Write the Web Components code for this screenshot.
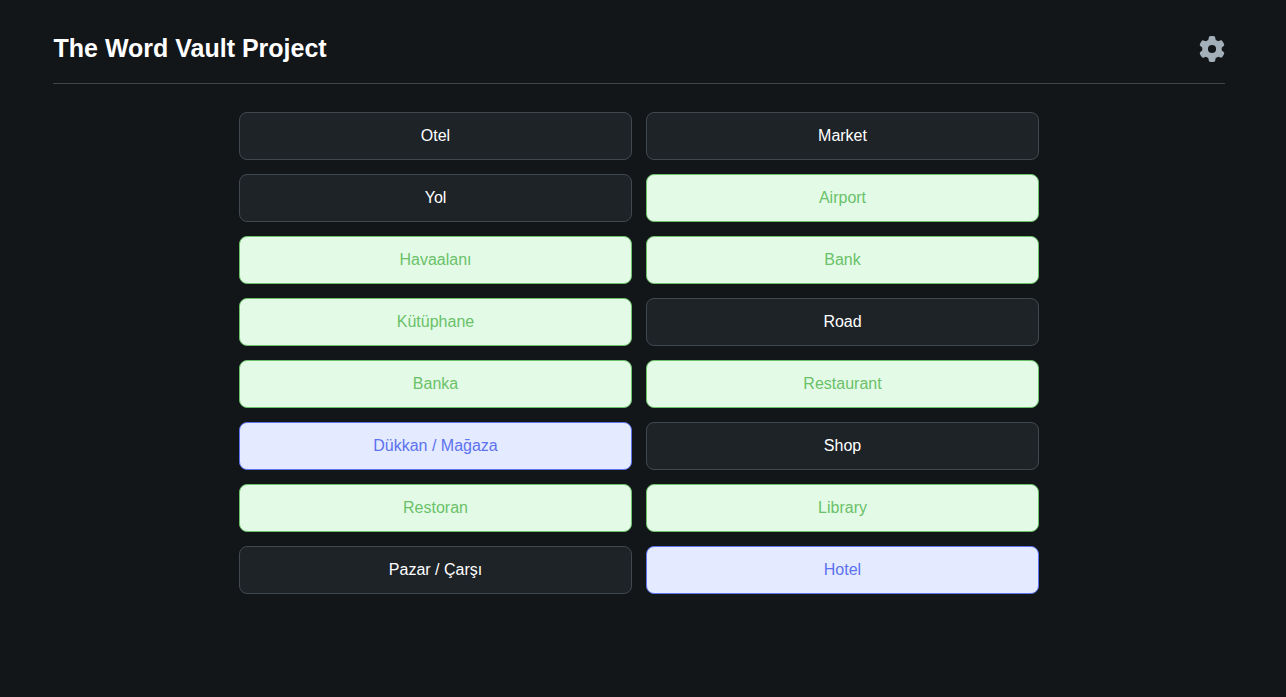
<!DOCTYPE html>
<html>
<head>
<meta charset="utf-8">
<title>The Word Vault Project</title>
<style>
  html, body { margin: 0; height: 100%; }
  body { background: #121619; font-family: "Liberation Sans", Arial, sans-serif; color: #fff; }
</style>
</head>
<body>
<vault-app>
  <vault-header slot="header" title-text="The Word Vault Project"></vault-header>
  <word-grid>
    <word-tile>Otel</word-tile>
    <word-tile>Market</word-tile>
    <word-tile>Yol</word-tile>
    <word-tile state="matched">Airport</word-tile>
    <word-tile state="matched">Havaalanı</word-tile>
    <word-tile state="matched">Bank</word-tile>
    <word-tile state="matched">Kütüphane</word-tile>
    <word-tile>Road</word-tile>
    <word-tile state="matched">Banka</word-tile>
    <word-tile state="matched">Restaurant</word-tile>
    <word-tile state="selected">Dükkan / Mağaza</word-tile>
    <word-tile>Shop</word-tile>
    <word-tile state="matched">Restoran</word-tile>
    <word-tile state="matched">Library</word-tile>
    <word-tile>Pazar / Çarşı</word-tile>
    <word-tile state="selected">Hotel</word-tile>
  </word-grid>
</vault-app>
<script>
class VaultApp extends HTMLElement {
  constructor() {
    super();
    this.attachShadow({ mode: 'open' });
    this.shadowRoot.innerHTML = `
      <style>
        :host { display: block; padding: 0 61px 0 53px; }
        .main { display: flex; justify-content: center; padding-top: 28px; }
      </style>
      <slot name="header"></slot>
      <div class="main"><slot></slot></div>
    `;
  }
}

class VaultHeader extends HTMLElement {
  constructor() {
    super();
    this.attachShadow({ mode: 'open' });
    this.shadowRoot.innerHTML = `
      <style>
        :host { display: flex; align-items: center; justify-content: space-between; box-sizing: content-box; height: 69px; padding-top: 14px; border-bottom: 1px solid #41464b; }
        h1 { margin: 0; padding: 0 0 2px 0.5px; font-size: 25px; font-weight: 700; line-height: 30px; color: #fff; }
        svg { display: block; width: 26px; height: 26px; fill: #a3afb9; }
        button { all: unset; display: block; cursor: pointer; padding: 0; }
      </style>
      <h1></h1>
      <button aria-label="Settings">
        <svg viewBox="0 0 512 512"><path d="M495.9 166.6c3.2 8.7 .5 18.4-6.4 24.6l-43.3 39.4c1.1 8.3 1.7 16.8 1.7 25.4s-.6 17.1-1.7 25.4l43.3 39.4c6.9 6.2 9.6 15.9 6.4 24.6c-4.4 11.9-9.7 23.3-15.8 34.3l-4.7 8.1c-6.6 11-14 21.4-22.1 31.2c-5.9 7.2-15.7 9.6-24.5 6.8l-55.7-17.7c-13.4 10.3-28.2 18.9-44 25.4l-12.5 57.1c-2 9.1-9 16.3-18.2 17.8c-13.8 2.3-28 3.5-42.5 3.5s-28.7-1.2-42.5-3.5c-9.2-1.5-16.2-8.7-18.2-17.8l-12.5-57.1c-15.8-6.5-30.6-15.1-44-25.4L83.1 425.9c-8.8 2.8-18.6 .3-24.5-6.8c-8.1-9.8-15.5-20.2-22.1-31.2l-4.7-8.1c-6.1-11-11.4-22.4-15.8-34.3c-3.2-8.7-.5-18.4 6.4-24.6l43.3-39.4C64.6 273.1 64 264.6 64 256s.6-17.1 1.7-25.4L22.4 191.2c-6.9-6.2-9.6-15.9-6.4-24.6c4.4-11.9 9.7-23.3 15.8-34.3l4.7-8.1c6.6-11 14-21.4 22.1-31.2c5.9-7.2 15.7-9.6 24.5-6.8l55.7 17.7c13.4-10.3 28.2-18.9 44-25.4l12.5-57.1c2-9.1 9-16.3 18.2-17.8C227.3 1.2 241.5 0 256 0s28.7 1.2 42.5 3.5c9.2 1.5 16.2 8.7 18.2 17.8l12.5 57.1c15.8 6.5 30.6 15.1 44 25.4l55.7-17.7c8.8-2.8 18.6-.3 24.5 6.8c8.1 9.8 15.5 20.2 22.1 31.2l4.7 8.1c6.1 11 11.4 22.4 15.8 34.3zM256 336a80 80 0 1 0 0-160 80 80 0 1 0 0 160z"/></svg>
      </button>
    `;
    this.shadowRoot.querySelector('h1').textContent = this.getAttribute('title-text');
  }
}

class WordGrid extends HTMLElement {
  constructor() {
    super();
    this.attachShadow({ mode: 'open' });
    this.shadowRoot.innerHTML = `
      <style>
        :host { display: grid; grid-template-columns: 393px 393px; gap: 14px; width: 800px; }
      </style>
      <slot></slot>
    `;
  }
}

class WordTile extends HTMLElement {
  constructor() {
    super();
    this.attachShadow({ mode: 'open' });
    this.shadowRoot.innerHTML = `
      <style>
        :host {
          display: flex; align-items: center; justify-content: center;
          box-sizing: border-box; height: 48px;
          background: #1e2328; color: #fff; border: 1px solid #41484f; border-radius: 8px;
          font-size: 16px; cursor: pointer;
        }
        :host([state="matched"]) { background: #e3fbe6; color: #6ac169; border-color: #6ac169; }
        :host([state="selected"]) { background: #e4eaff; color: #5c72ee; border-color: #5c72ee; }
      </style>
      <slot></slot>
    `;
  }
}

customElements.define('vault-app', VaultApp);
customElements.define('vault-header', VaultHeader);
customElements.define('word-grid', WordGrid);
customElements.define('word-tile', WordTile);
</script>
</body>
</html>
